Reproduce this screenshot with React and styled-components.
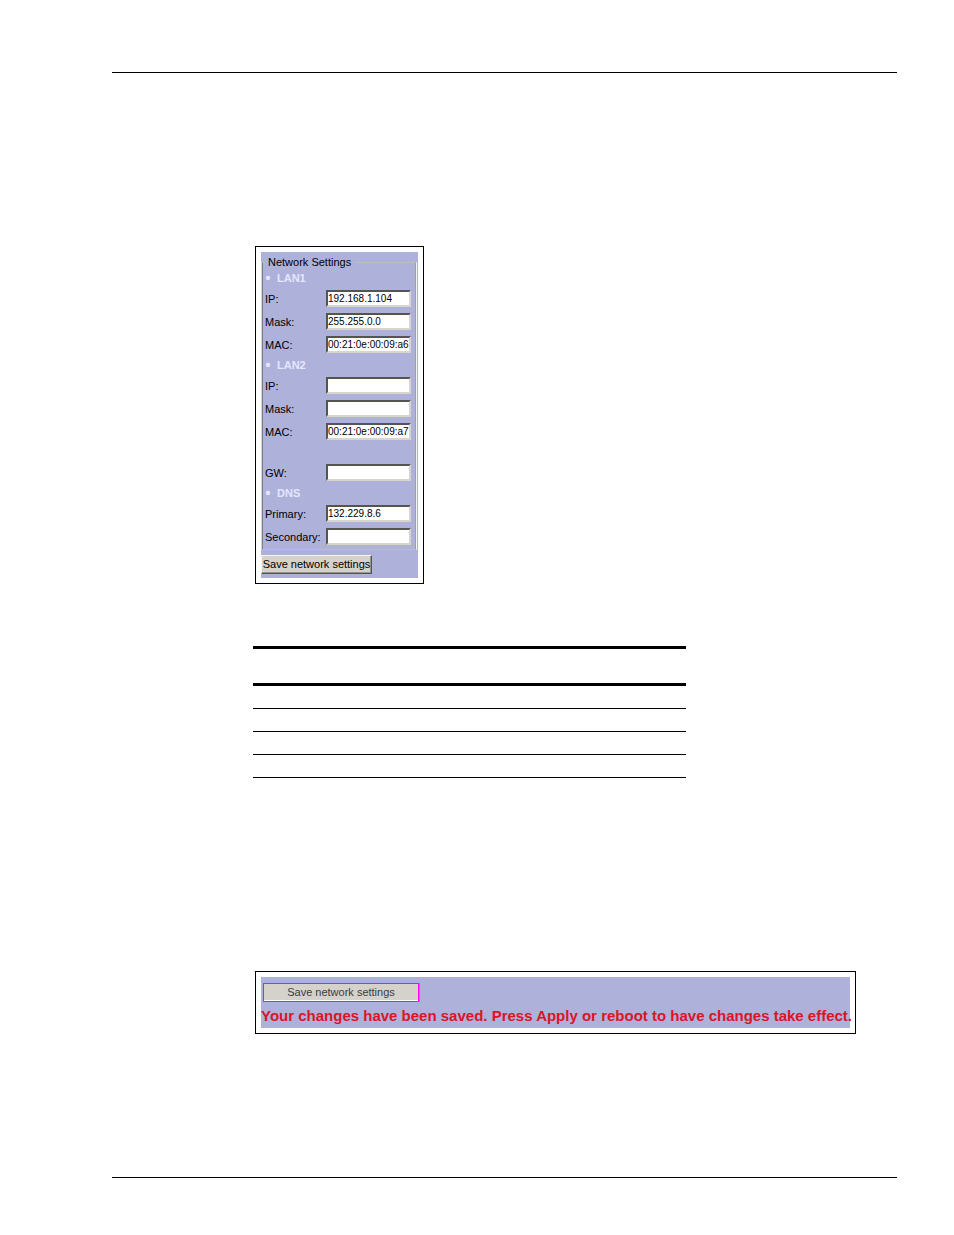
import React from 'react';
import styled, { createGlobalStyle } from 'styled-components';

const GlobalStyle = createGlobalStyle`
  *,
  *:before,
  *:after {
    box-sizing: border-box;
  }

  body {
    margin: 0;
    background: #fff;
    color: #000;
    font-family: 'Liberation Sans', Arial, sans-serif;
    font-size: 11px;
  }
`;

const StyledPage = styled.div`
  display: flex;
  flex-direction: column;
  padding: 72px 57px 57px 112px;
`;

const StyledRule = styled.hr`
  width: 100%;
  height: 1px;
  margin: 0;
  border: 0;
  background: #000;
`;

const StyledMain = styled.main`
  display: flex;
  flex-direction: column;
  align-items: flex-start;
  padding: 173px 0 143px 141px;
`;

const StyledFigure = styled.figure`
  width: ${({ $width }) => $width}px;
  max-width: 100%;
  margin: 0 2px;
  padding: 5px;
  border: 1px solid #000;
`;

const StyledSettingsForm = styled.form`
  display: flex;
  flex-direction: column;
  align-items: flex-start;
  gap: 5px;
  padding: 3px 0 4px;
  background: #aeb1d9;
`;

const StyledFieldset = styled.fieldset`
  align-self: stretch;
  min-width: 0;
  margin: 0 1px 0 0;
  padding: 0 4px 1px 2px;
  border-width: 1px 2px;
  border-style: solid groove solid ridge;
  border-color: #bdbdbd #f4f4f4 #bdbdbd #d0d0d8;

  legend {
    padding: 0 3px;
    line-height: 14px;
  }
`;

const StyledGroupTitle = styled.h3`
  display: flex;
  gap: 6px;
  height: 18px;
  margin: 0;
  color: #e6e6ff;
  font-size: 11px;
  line-height: 18px;

  &:before {
    content: '•';
    width: 6px;
    font-size: 15px;
    text-align: center;
  }
`;

const StyledGroup = styled.div`
  padding-top: ${({ $spaced }) => ($spaced ? 18 : 0)}px;
`;

const StyledField = styled.div`
  display: grid;
  grid-template-columns: 61px minmax(0, 1fr);
  align-items: center;
  height: 23px;

  label {
    white-space: nowrap;
  }

  input {
    width: 100%;
    height: 17px;
    padding: 0;
    border: 2px solid;
    border-color: #55554f #d8d5ce #d8d5ce #55554f;
    border-radius: 0;
    outline: 0;
    background: #fff;
    color: #000;
    font-family: inherit;
    font-size: 10px;
  }
`;

const StyledButton = styled.button`
  width: ${({ $width }) => $width}px;
  height: 19px;
  padding: 0;
  border: 1px solid;
  border-color: ${({ $marked }) => ($marked ? '#f0f' : '#f4f3ee #55554f #55554f #f4f3ee')};
  border-radius: 0;
  background: #d5d2cb;
  box-shadow: ${({ $marked }) =>
    $marked ? 'inset 0 -1px 0 #fff, 1px 0 0 #8c8c9c' : 'inset -1px -1px 0 #96938c'};
  color: ${({ $marked }) => ($marked ? '#3c3c3c' : '#000')};
  font-family: inherit;
  font-size: 11px;
  line-height: 15px;
  white-space: nowrap;
`;

const StyledTable = styled.table`
  width: 433px;
  max-width: 100%;
  margin: 62px 0 193px;
  border-spacing: 0;

  th,
  td {
    padding: 0;
  }

  th {
    height: 40px;
    border-top: 3px solid #000;
    border-bottom: 3px solid #000;
  }

  td {
    height: 23px;
    border-bottom: 1px solid #000;
  }
`;

const StyledSavedPanel = styled.div`
  display: flex;
  flex-direction: column;
  align-items: flex-start;
  gap: 4px;
  padding: 6px 0 3px;
  background: #aeb1d9;

  button {
    margin-left: 2px;
  }

  p {
    margin: 0;
    color: #dc1428;
    font-size: 15px;
    font-weight: bold;
    line-height: 19px;
    white-space: nowrap;
  }
`;

const groups = [
  {
    id: 'lan1',
    title: 'LAN1',
    fields: [
      { label: 'IP:', value: '192.168.1.104' },
      { label: 'Mask:', value: '255.255.0.0' },
      { label: 'MAC:', value: '00:21:0e:00:09:a6' },
    ],
  },
  {
    id: 'lan2',
    title: 'LAN2',
    fields: [
      { label: 'IP:', value: '' },
      { label: 'Mask:', value: '' },
      { label: 'MAC:', value: '00:21:0e:00:09:a7' },
    ],
  },
  { id: 'gateway', fields: [{ label: 'GW:', value: '' }] },
  {
    id: 'dns',
    title: 'DNS',
    fields: [
      { label: 'Primary:', value: '132.229.8.6' },
      { label: 'Secondary:', value: '' },
    ],
  },
];

const NetworkSettings = () => (
  <StyledSettingsForm onSubmit={e => e.preventDefault()}>
    <StyledFieldset>
      <legend>Network Settings</legend>
      {groups.map(({ id, title, fields }) => (
        <StyledGroup key={id} $spaced={!title}>
          {title && <StyledGroupTitle>{title}</StyledGroupTitle>}
          {fields.map(({ label, value }, i) => (
            <StyledField key={i}>
              <label htmlFor={`${id}-${i}`}>{label}</label>
              <input id={`${id}-${i}`} type="text" defaultValue={value} />
            </StyledField>
          ))}
        </StyledGroup>
      ))}
    </StyledFieldset>
    <StyledButton type="submit" $width={111}>
      Save network settings
    </StyledButton>
  </StyledSettingsForm>
);

const App = () => (
  <>
    <GlobalStyle />
    <StyledPage>
      <StyledRule />
      <StyledMain>
        <StyledFigure $width={169}>
          <NetworkSettings />
        </StyledFigure>

        <StyledTable>
          <thead>
            <tr>
              <th />
              <th />
            </tr>
          </thead>
          <tbody>
            {[0, 1, 2, 3].map(row => (
              <tr key={row}>
                <td />
                <td />
              </tr>
            ))}
          </tbody>
        </StyledTable>

        <StyledFigure $width={601}>
          <StyledSavedPanel>
            <StyledButton type="button" $width={156} $marked>
              Save network settings
            </StyledButton>
            <p>Your changes have been saved. Press Apply or reboot to have changes take effect.</p>
          </StyledSavedPanel>
        </StyledFigure>
      </StyledMain>
      <StyledRule />
    </StyledPage>
  </>
);

export default App;
